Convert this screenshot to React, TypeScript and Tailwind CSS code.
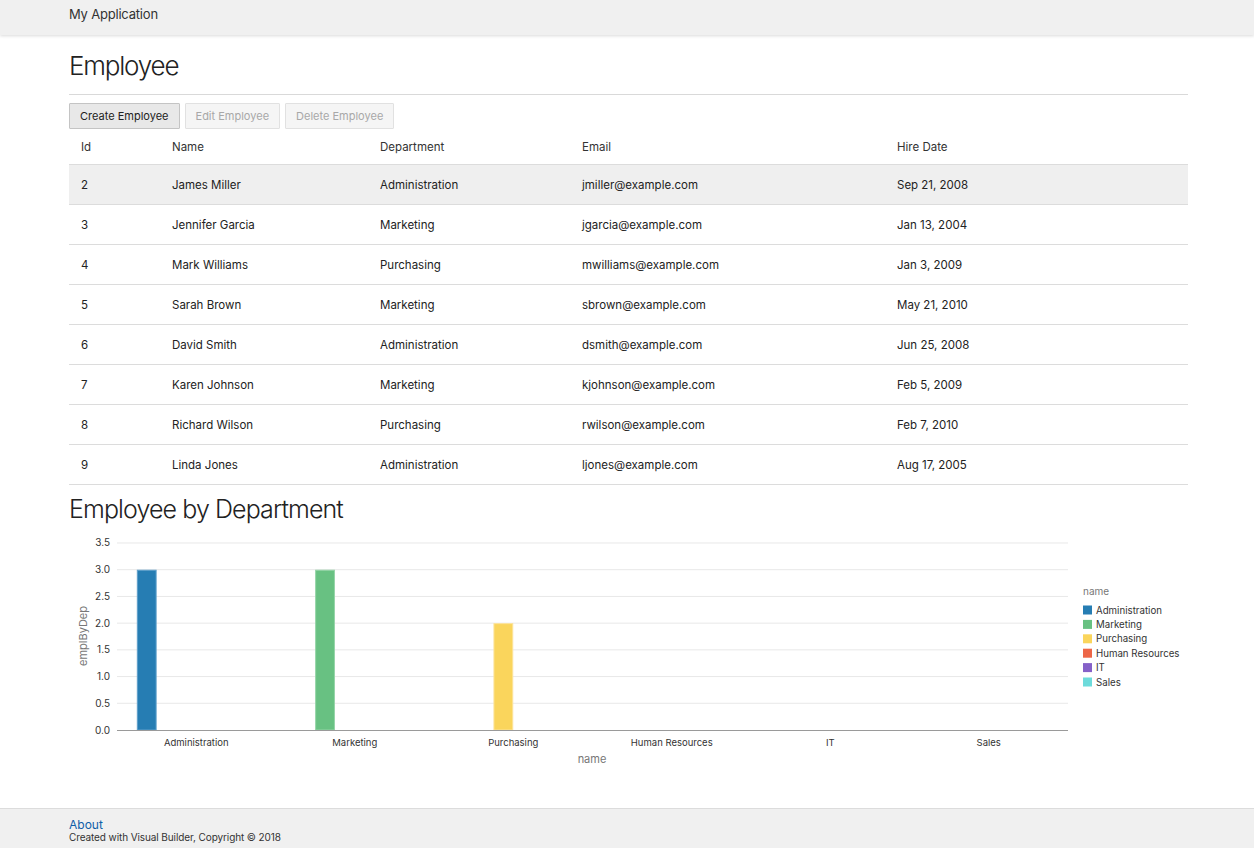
import React from "react";

const rows = [
  ["2", "James Miller", "Administration", "jmiller@example.com", "Sep 21, 2008"],
  ["3", "Jennifer Garcia", "Marketing", "jgarcia@example.com", "Jan 13, 2004"],
  ["4", "Mark Williams", "Purchasing", "mwilliams@example.com", "Jan 3, 2009"],
  ["5", "Sarah Brown", "Marketing", "sbrown@example.com", "May 21, 2010"],
  ["6", "David Smith", "Administration", "dsmith@example.com", "Jun 25, 2008"],
  ["7", "Karen Johnson", "Marketing", "kjohnson@example.com", "Feb 5, 2009"],
  ["8", "Richard Wilson", "Purchasing", "rwilson@example.com", "Feb 7, 2010"],
  ["9", "Linda Jones", "Administration", "ljones@example.com", "Aug 17, 2005"],
];

const series = [
  { name: "Administration", color: "#267db3", edge: "#5fa0cb", value: 3 },
  { name: "Marketing", color: "#68c182", edge: "#95d4a7", value: 3 },
  { name: "Purchasing", color: "#fad55c", edge: "#fce39a", value: 2 },
  { name: "Human Resources", color: "#ed6647", edge: "#f29a85", value: 0 },
  { name: "IT", color: "#8561c8", edge: "#a98fd9", value: 0 },
  { name: "Sales", color: "#6ddbdb", edge: "#9be6e6", value: 0 },
];

const cols = ["w-[91px]", "w-[208px]", "w-[202px]", "w-[315px]", "flex-1"];

function Chart() {
  const x0 = 48;
  const x1 = 999;
  const yZero = 200;
  const unit = 53.43;
  const catW = (x1 - x0) / 6;
  const barW = (catW * 0.75) / 6;
  const ticks = [0, 0.5, 1, 1.5, 2, 2.5, 3, 3.5];
  return (
    <svg width="1119" height="245" className="block" style={{ fontFamily: "Inter, 'Noto Sans', sans-serif" }}>
      {ticks.map((t) => {
        const y = yZero - t * unit;
        return (
          <g key={t}>
            {t > 0 && <line x1={x0} x2={x1} y1={y} y2={y} stroke="#e8e8e8" strokeWidth="1" />}
            <text x={41} y={y + 3.5} fontSize="10" fill="#333" textAnchor="end">
              {t.toFixed(1)}
            </text>
          </g>
        );
      })}
      {series.map((s, i) => {
        if (!s.value) return null;
        const x = x0 + i * catW + catW * 0.125 + i * barW;
        const h = s.value * unit;
        return (
          <rect key={s.name} x={x + 0.5} y={yZero - h + 0.5} width={barW - 1} height={h - 0.5} fill={s.color} stroke={s.edge} strokeWidth="1" />
        );
      })}
      <line x1={x0} x2={x1} y1={yZero + 0.5} y2={yZero + 0.5} stroke="#9a9a9a" strokeWidth="1" />
      {series.map((s, i) => (
        <text key={s.name} x={x0 + i * catW + catW / 2} y={216} fontSize="9.5" fill="#333" textAnchor="middle">
          {s.name}
        </text>
      ))}
      <text x={523} y={233} fontSize="11" fill="#777" textAnchor="middle">
        name
      </text>
      <text x={0} y={0} fontSize="11" fill="#777" textAnchor="middle" transform="translate(18 106) rotate(-90)">
        emplByDep
      </text>
      <text x={1014} y={65} fontSize="10" fill="#777">
        name
      </text>
      {series.map((s, i) => {
        const y = 80 + i * 14.4;
        return (
          <g key={s.name}>
            <rect x={1014} y={y - 4.5} width={9} height={9} fill={s.color} />
            <text x={1027} y={y + 3.5} fontSize="9.7" fill="#333">
              {s.name}
            </text>
          </g>
        );
      })}
    </svg>
  );
}

export default function App() {
  return (
    <div className="min-h-screen flex flex-col bg-white text-[#333]" style={{ fontFamily: "Inter, 'Noto Sans', sans-serif" }}>
      <header className="h-[35px] bg-[#f0f0f0] shadow-[0_1px_3px_rgba(0,0,0,0.15)] px-[69px] pt-[6px] relative z-10">
        <div className="text-[13px] leading-[16px] text-[#333] tracking-[-0.2px]">My Application</div>
      </header>
      <main className="flex-1 pl-[69px] pr-[66px]">
        <h1 className="mt-[14px] text-[26px] leading-[34px] font-light tracking-[-1.2px] text-[#222]">Employee</h1>
        <div className="mt-[11px] border-t border-[#d9d9d9]" />
        <div className="mt-[8px] flex gap-[5px]">
          <button className="h-[26px] px-[10px] text-[11px] border border-[#c4c4c4] bg-[#e8e8e8] text-[#222] rounded-[1px]">Create Employee</button>
          <button className="h-[26px] px-[10px] text-[11px] border border-[#e1e1e1] bg-[#f5f5f5] text-[#a8a8a8] rounded-[1px]">Edit Employee</button>
          <button className="h-[26px] px-[10px] text-[11px] border border-[#e1e1e1] bg-[#f5f5f5] text-[#a8a8a8] rounded-[1px]">Delete Employee</button>
        </div>
        <div className="mt-[1px] text-[11.5px]">
          <div className="flex h-[35px] items-center border-b border-[#dcdcdc] pt-[2px]">
            {["Id", "Name", "Department", "Email", "Hire Date"].map((h, i) => (
              <div key={h} className={`${cols[i]} pl-[12px] text-[#333]`}>
                {h}
              </div>
            ))}
          </div>
          {rows.map((r, ri) => (
            <div key={r[0]} className={`flex h-[40px] items-center border-b border-[#dcdcdc] pt-[2px] ${ri === 0 ? "bg-[#efefef]" : ""}`}>
              {r.map((c, i) => (
                <div key={i} className={`${cols[i]} pl-[12px] text-[#222]`}>
                  {c}
                </div>
              ))}
            </div>
          ))}
        </div>
        <h2 className="mt-[8px] text-[25px] leading-[32px] font-light tracking-[-0.9px] text-[#222]">Employee by Department</h2>
        <div className="mt-[5px]">
          <Chart />
        </div>
      </main>
      <footer className="h-[40px] bg-[#f0f0f0] border-t border-[#dcdcdc] px-[69px] pt-[10px]">
        <div className="text-[12px] leading-[12px] text-[#0f5ea8]">About</div>
        <div className="text-[10px] leading-[12px] text-[#333] tracking-[-0.1px]">Created with Visual Builder, Copyright © 2018</div>
      </footer>
    </div>
  );
}
